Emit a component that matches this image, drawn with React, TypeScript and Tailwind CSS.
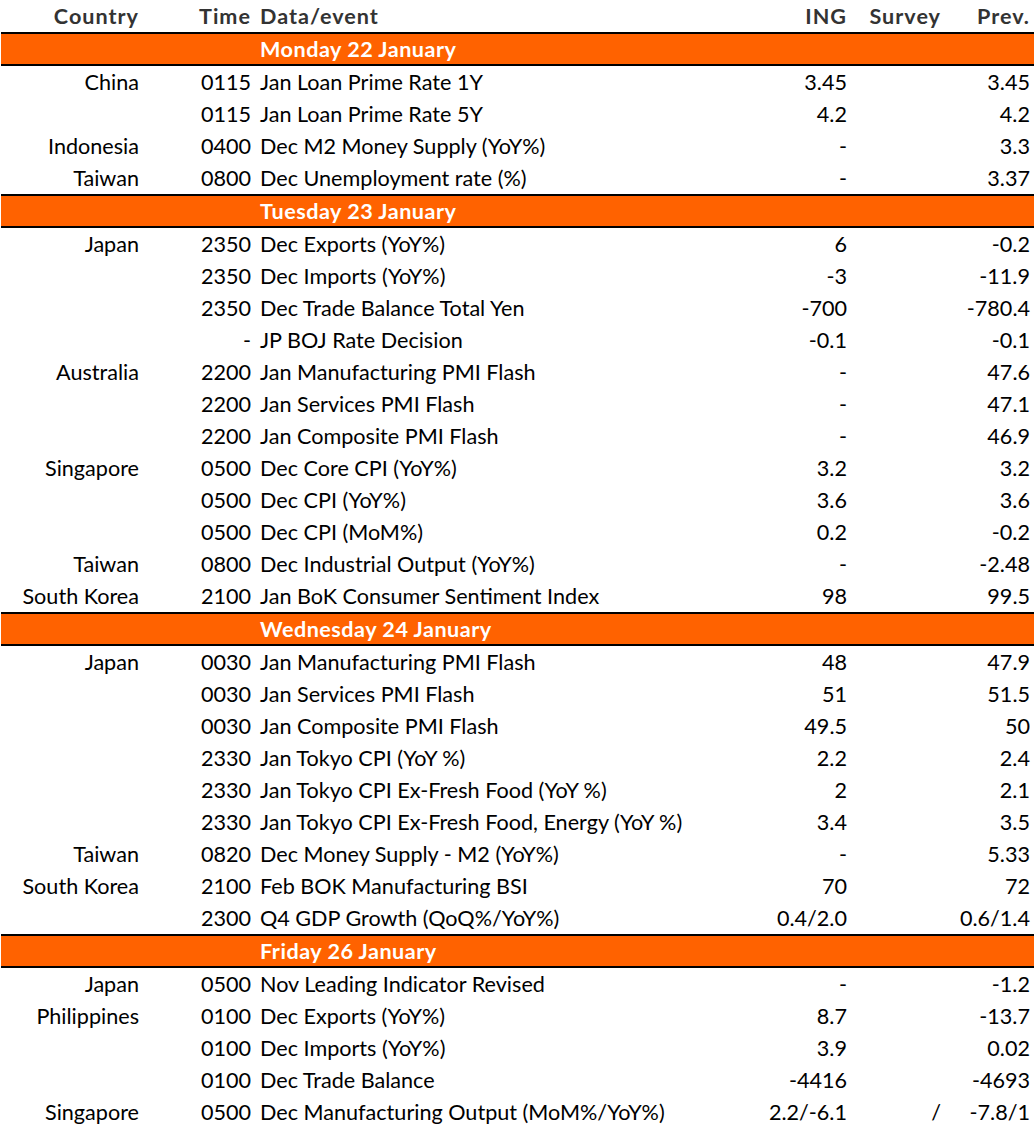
import React from "react";

type Row = [string, string, string, string, string, string];
type Section = { title: string; rows: Row[] };

const sections: Section[] = [
  {
    title: "Monday 22 January",
    rows: [
      ["China", "0115", "Jan Loan Prime Rate 1Y", "3.45", "", "3.45"],
      ["", "0115", "Jan Loan Prime Rate 5Y", "4.2", "", "4.2"],
      ["Indonesia", "0400", "Dec M2 Money Supply (YoY%)", "-", "", "3.3"],
      ["Taiwan", "0800", "Dec Unemployment rate (%)", "-", "", "3.37"],
    ],
  },
  {
    title: "Tuesday 23 January",
    rows: [
      ["Japan", "2350", "Dec Exports (YoY%)", "6", "", "-0.2"],
      ["", "2350", "Dec Imports (YoY%)", "-3", "", "-11.9"],
      ["", "2350", "Dec Trade Balance Total Yen", "-700", "", "-780.4"],
      ["", "-", "JP BOJ Rate Decision", "-0.1", "", "-0.1"],
      ["Australia", "2200", "Jan Manufacturing PMI Flash", "-", "", "47.6"],
      ["", "2200", "Jan Services PMI Flash", "-", "", "47.1"],
      ["", "2200", "Jan Composite PMI Flash", "-", "", "46.9"],
      ["Singapore", "0500", "Dec Core CPI (YoY%)", "3.2", "", "3.2"],
      ["", "0500", "Dec CPI (YoY%)", "3.6", "", "3.6"],
      ["", "0500", "Dec CPI (MoM%)", "0.2", "", "-0.2"],
      ["Taiwan", "0800", "Dec Industrial Output (YoY%)", "-", "", "-2.48"],
      ["South Korea", "2100", "Jan BoK Consumer Sentiment Index", "98", "", "99.5"],
    ],
  },
  {
    title: "Wednesday 24 January",
    rows: [
      ["Japan", "0030", "Jan Manufacturing PMI Flash", "48", "", "47.9"],
      ["", "0030", "Jan Services PMI Flash", "51", "", "51.5"],
      ["", "0030", "Jan Composite PMI Flash", "49.5", "", "50"],
      ["", "2330", "Jan Tokyo CPI (YoY %)", "2.2", "", "2.4"],
      ["", "2330", "Jan Tokyo CPI Ex-Fresh Food (YoY %)", "2", "", "2.1"],
      ["", "2330", "Jan Tokyo CPI Ex-Fresh Food, Energy (YoY %)", "3.4", "", "3.5"],
      ["Taiwan", "0820", "Dec Money Supply - M2 (YoY%)", "-", "", "5.33"],
      ["South Korea", "2100", "Feb BOK Manufacturing BSI", "70", "", "72"],
      ["", "2300", "Q4 GDP Growth (QoQ%/YoY%)", "0.4/2.0", "", "0.6/1.4"],
    ],
  },
  {
    title: "Friday 26 January",
    rows: [
      ["Japan", "0500", "Nov Leading Indicator Revised", "-", "", "-1.2"],
      ["Philippines", "0100", "Dec Exports (YoY%)", "8.7", "", "-13.7"],
      ["", "0100", "Dec Imports (YoY%)", "3.9", "", "0.02"],
      ["", "0100", "Dec Trade Balance", "-4416", "", "-4693"],
      ["Singapore", "0500", "Dec Manufacturing Output (MoM%/YoY%)", "2.2/-6.1", "/", "-7.8/1"],
    ],
  },
];

const grid = "grid grid-cols-[138px_112px_1fr_96px_94px_89px] pr-[4px]";

export default function App() {
  return (
    <div
      className="w-[1035px] bg-white px-[1px] text-[21.6px] leading-none"
      style={{ fontFamily: "Lato, 'Liberation Sans', sans-serif" }}
    >
      <div className={`${grid} h-[32px] items-center pt-[2px] font-bold tracking-[1px] text-[#333333]`}>
        <div className="text-right">Country</div>
        <div className="text-right">Time</div>
        <div className="pl-[9px]">Data/event</div>
        <div className="text-right">ING</div>
        <div className="text-right">Survey</div>
        <div className="text-right">Prev.</div>
      </div>
      {sections.map((s) => (
        <div key={s.title}>
          <div className={`${grid} h-[34px] items-center border-y-2 border-black bg-[#ff6200] pt-[2px] font-bold tracking-[0.5px] text-white`}>
            <div />
            <div />
            <div className="pl-[9px]">{s.title}</div>
          </div>
          {s.rows.map((r, i) => (
            <div key={i} className={`${grid} h-[32px] items-center pt-[2px] text-black`}>
              <div className="text-right whitespace-nowrap">{r[0]}</div>
              <div className="text-right">{r[1]}</div>
              <div className="pl-[9px] whitespace-nowrap">{r[2]}</div>
              <div className="text-right">{r[3]}</div>
              <div className="text-right">{r[4]}</div>
              <div className="text-right">{r[5]}</div>
            </div>
          ))}
        </div>
      ))}
    </div>
  );
}
